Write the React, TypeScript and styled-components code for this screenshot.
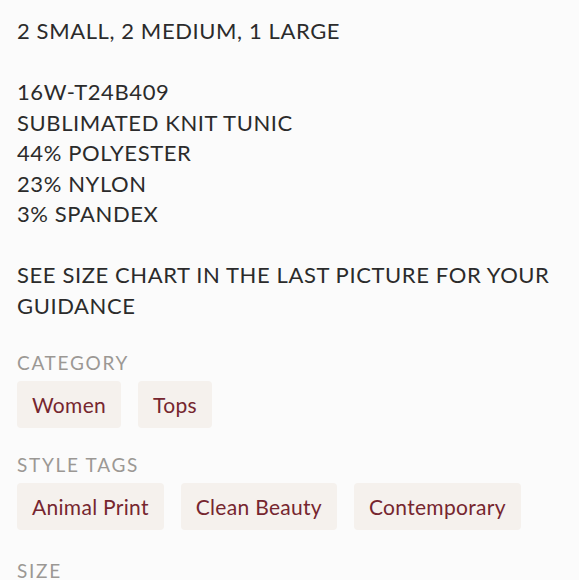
import React from 'react';
import styled, { createGlobalStyle } from 'styled-components';

const GlobalStyle = createGlobalStyle`
  html, body {
    margin: 0;
    padding: 0;
    background: #fbfbfb;
  }
  body {
    font-family: Lato, 'Noto Sans', sans-serif;
  }
`;

const Page = styled.div`
  width: 579px;
  height: 580px;
  overflow: hidden;
  padding: 16px 8px 0 17px;
  box-sizing: border-box;
  background: #fbfbfb;
`;

const Description = styled.div`
  color: #2b2b2b;
  font-size: 22px;
  line-height: 30.5px;
  letter-spacing: 0.6px;
  margin-bottom: 31px;
`;

const Line = styled.p`
  margin: 0;
  min-height: 30.5px;
`;

const Section = styled.section<{ $after?: number }>`
  display: flex;
  flex-direction: column;
  gap: 7px;
  margin-bottom: ${(p) => p.$after ?? 26}px;
`;

const Label = styled.h3`
  margin: 0;
  font-size: 19px;
  line-height: 22px;
  font-weight: 400;
  letter-spacing: 1.7px;
  color: #9b9894;
`;

const ChipRow = styled.div`
  display: flex;
  flex-wrap: wrap;
  gap: 17px;
`;

const Chip = styled.span`
  display: inline-flex;
  align-items: center;
  height: 47px;
  padding: 0 15px;
  border-radius: 4px;
  background: #f5f1ed;
  color: #76262f;
  font-size: 21px;
  letter-spacing: 0.3px;
`;

const lines = [
  '2 SMALL, 2 MEDIUM, 1 LARGE',
  '',
  '16W-T24B409',
  'SUBLIMATED KNIT TUNIC',
  '44% POLYESTER',
  '23% NYLON',
  '3% SPANDEX',
  '',
  'SEE SIZE CHART IN THE LAST PICTURE FOR YOUR GUIDANCE',
];

const sections = [
  { label: 'CATEGORY', chips: ['Women', 'Tops'], after: 26 },
  { label: 'STYLE TAGS', chips: ['Animal Print', 'Clean Beauty', 'Contemporary'], after: 30 },
  { label: 'SIZE', chips: [], after: 0 },
];

export default function App() {
  return (
    <Page>
      <GlobalStyle />
      <Description>
        {lines.map((l, i) => (
          <Line key={i}>{l}</Line>
        ))}
      </Description>
      {sections.map((s) => (
        <Section key={s.label} $after={s.after}>
          <Label>{s.label}</Label>
          {s.chips.length > 0 && (
            <ChipRow>
              {s.chips.map((c) => (
                <Chip key={c}>{c}</Chip>
              ))}
            </ChipRow>
          )}
        </Section>
      ))}
    </Page>
  );
}
